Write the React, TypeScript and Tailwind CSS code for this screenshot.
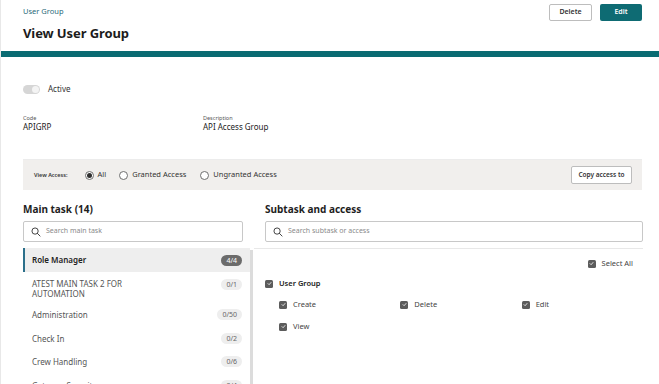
import React from "react";

const Check = ({ size = 8 }: { size?: number }) => (
  <span
    className="inline-flex items-center justify-center rounded-[1.5px] bg-[#5c5c5c] shrink-0"
    style={{ width: size, height: size }}
  >
    <svg width={size - 3} height={size - 3} viewBox="0 0 10 10" fill="none">
      <path d="M2 5.2 L4.2 7.4 L8 3" stroke="white" strokeWidth="1.6" strokeLinecap="round" strokeLinejoin="round" />
    </svg>
  </span>
);

const Radio = ({ on }: { on?: boolean }) => (
  <span className="inline-flex w-[9px] h-[9px] rounded-full border border-[#6f6f6f] items-center justify-center bg-white shrink-0">
    {on && <span className="w-[5px] h-[5px] rounded-full bg-[#2f2f2f]" />}
  </span>
);

const SearchIcon = () => (
  <svg width="10" height="10" viewBox="0 0 16 16" fill="none" className="shrink-0">
    <circle cx="6.5" cy="6.5" r="5" stroke="#3a3a3a" strokeWidth="1.5" />
    <path d="M10.2 10.2 L14.5 14.5" stroke="#3a3a3a" strokeWidth="1.5" strokeLinecap="round" />
  </svg>
);

const tasks: { name: string[]; count: string; selected?: boolean }[] = [
  { name: ["Role Manager"], count: "4/4", selected: true },
  { name: ["ATEST MAIN TASK 2 FOR", "AUTOMATION"], count: "0/1" },
  { name: ["Administration"], count: "0/50" },
  { name: ["Check In"], count: "0/2" },
  { name: ["Crew Handling"], count: "0/6" },
  { name: ["Gateway Security"], count: "0/4" },
];

export default function App() {
  return (
    <div
      className="w-[659px] h-[384px] overflow-hidden bg-white text-[#2b2b2b] border-l border-[#e8e8e8]"
      style={{ fontFamily: '"Noto Sans", "Open Sans", sans-serif' }}
    >
      {/* Header */}
      <div className="flex justify-between pl-[22px] pr-[17px] h-[51px]">
        <div>
          <div className="text-[7.5px] text-[#2a6a7a] mt-[6px] leading-[10px]">User Group</div>
          <div className="text-[13px] font-bold text-[#1c1c1c] mt-[8px] leading-[18px] tracking-[-0.1px]">View User Group</div>
        </div>
        <div className="flex gap-[8px] mt-[4px] h-[17px]">
          <button className="w-[43px] h-[17px] border border-[#bdbdbd] rounded-[2px] bg-white text-[7px] font-semibold text-[#333]">Delete</button>
          <button className="w-[42px] h-[17px] rounded-[2px] bg-[#0e6b73] text-[7px] font-semibold text-white">Edit</button>
        </div>
      </div>
      <div className="h-[6px] bg-[#0a6b72]" />

      <div className="pl-[22px] pr-[17px]">
        {/* Active toggle */}
        <div className="flex items-center mt-[27px] h-[10px]">
          <span className="relative w-[17px] h-[9px] rounded-full bg-[#d6d6d6]">
            <span className="absolute right-[1px] top-[1px] w-[7px] h-[7px] rounded-full bg-[#f4f4f4]" />
          </span>
          <span className="ml-[8px] text-[8px] text-[#333]">Active</span>
        </div>

        {/* Code / Description */}
        <div className="flex mt-[21px]">
          <div className="w-[180px]">
            <div className="text-[5.5px] text-[#555] leading-[7px]">Code</div>
            <div className="text-[8px] text-[#222] leading-[10px]">APIGRP</div>
          </div>
          <div>
            <div className="text-[5.5px] text-[#555] leading-[7px]">Description</div>
            <div className="text-[8px] text-[#222] leading-[10px]">API Access Group</div>
          </div>
        </div>

        {/* Filter bar */}
        <div className="mt-[27px] border-t border-[#ececec]" />
        <div className="h-[30px] bg-[#f1efed] flex items-center pl-[11px] pr-[10px]">
          <span className="text-[5.5px] font-semibold text-[#333]">View Access:</span>
          <div className="flex items-center ml-[17px] gap-[4px]">
            <Radio on />
            <span className="text-[7.5px] text-[#333]">All</span>
          </div>
          <div className="flex items-center ml-[13px] gap-[4px]">
            <Radio />
            <span className="text-[7.5px] text-[#333]">Granted Access</span>
          </div>
          <div className="flex items-center ml-[14px] gap-[4px]">
            <Radio />
            <span className="text-[7.5px] text-[#333]">Ungranted Access</span>
          </div>
          <button className="ml-auto w-[61px] h-[18px] border border-[#bdbdbd] rounded-[2px] bg-white text-[6.5px] font-semibold text-[#333]">
            Copy access to
          </button>
        </div>

        {/* Columns */}
        <div className="flex mt-[12px]">
          {/* Left */}
          <div className="w-[231px] shrink-0">
            <div className="text-[10px] font-bold text-[#1e1e1e] leading-[14px]">Main task (14)</div>
            <div className="mt-[5px] w-[220px] h-[21px] border border-[#c8c8c8] rounded-[2px] flex items-center pl-[7px] gap-[5px]">
              <SearchIcon />
              <span className="text-[7px] text-[#8a8a8a]">Search main task</span>
            </div>
            <div className="flex mt-[6px]">
              <div className="w-[227px]">
                {tasks.map((t, i) => (
                  <div
                    key={i}
                    className={
                      "flex justify-between pr-[8px] " +
                      (t.selected
                        ? "bg-[#eeeeee] border-l-2 border-[#2b6f8a] pl-[7px] h-[24px] items-center"
                        : t.name.length > 1
                        ? "pl-[9px] h-[31px] items-start pt-[7px]"
                        : "pl-[9px] h-[23.5px] items-center")
                    }
                  >
                    <div className={"text-[8px] leading-[9.5px] " + (t.selected ? "font-semibold text-[#222]" : "text-[#555]")}>
                      {t.name.map((l, j) => (
                        <div key={j}>{l}</div>
                      ))}
                    </div>
                    <span
                      className={
                        "rounded-full text-[7px] leading-[11px] px-[5px] " +
                        (t.selected ? "bg-[#6b6b6b] text-white" : "bg-[#eeeeee] text-[#666]")
                      }
                    >
                      {t.count}
                    </span>
                  </div>
                ))}
              </div>
              <div className="w-[3px] ml-[0px] h-[140px] bg-[#dcdcdc] mt-[2px]" />
            </div>
          </div>

          {/* Divider */}
          <div className="w-px bg-[#e4e4e4] h-[200px] -mt-[4px]" />

          {/* Right */}
          <div className="flex-1">
            <div className="pl-[11px]">
              <div className="text-[10px] font-bold text-[#1e1e1e] leading-[14px]">Subtask and access</div>
              <div className="mt-[5px] h-[21px] border border-[#c8c8c8] rounded-[2px] flex items-center pl-[7px] gap-[5px]">
                <SearchIcon />
                <span className="text-[7px] text-[#8a8a8a]">Search subtask or access</span>
              </div>
            </div>
            <div className="mt-[6px] border-t border-[#e8e8e8]" />
            <div className="pl-[11px]">
              <div className="flex justify-end items-center gap-[6px] mt-[9px] pr-[10px]">
                <Check />
                <span className="text-[7.5px] text-[#444]">Select All</span>
              </div>
              <div className="flex items-center gap-[6px] mt-[9px]">
                <Check />
                <span className="text-[7.5px] font-semibold text-[#222]">User Group</span>
              </div>
              <div className="grid grid-cols-3 pl-[14px] mt-[10px] gap-y-[12px] w-[378px]">
                {["Create", "Delete", "Edit", "View"].map((l) => (
                  <div key={l} className="flex items-center gap-[6px] h-[10px]">
                    <Check />
                    <span className="text-[7.5px] text-[#444]">{l}</span>
                  </div>
                ))}
              </div>
            </div>
          </div>
        </div>
      </div>
    </div>
  );
}
